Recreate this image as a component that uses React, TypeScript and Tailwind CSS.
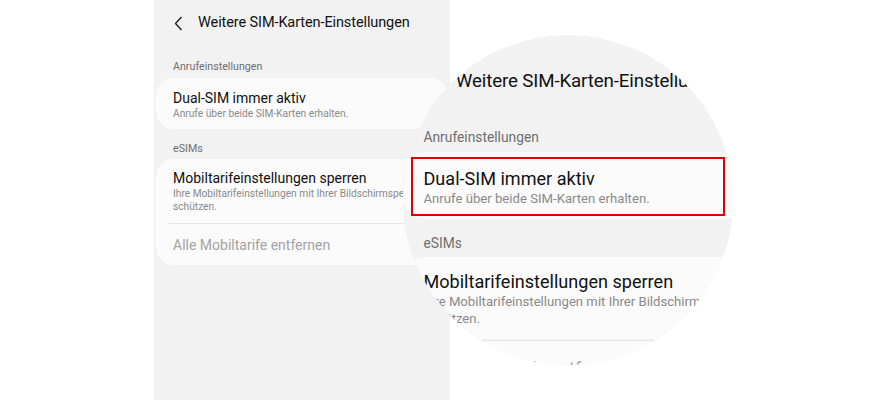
import React from 'react';

const font = { fontFamily: 'Roboto, "Noto Sans", sans-serif' };

function Screen() {
  return (
    <div className="w-[296px] h-[400px] bg-[#f2f2f2] text-[#111]" style={font}>
      {/* Header */}
      <div className="h-[46px] flex items-center pl-[20px] gap-[15px]">
        <svg width="9" height="15" viewBox="0 0 9 15" fill="none">
          <polyline points="7.5,1 1.5,7.5 7.5,14" stroke="#222" strokeWidth="1.4" strokeLinejoin="round" />
        </svg>
        <span className="text-[14.5px] leading-[18px] tracking-[-0.1px]">Weitere SIM-Karten-Einstellungen</span>
      </div>

      {/* Anrufeinstellungen */}
      <div className="pl-[19px] pt-[14px] pb-[4px] text-[10.7px] leading-[14px] text-[#6f6f6f]">Anrufeinstellungen</div>
      <div className="mx-[2px] rounded-[18px] bg-[#fbfbfb] pl-[17px] pt-[11px] pb-[9px]">
        <div className="text-[14px] leading-[18px]">Dual-SIM immer aktiv</div>
        <div className="text-[10.2px] leading-[13px] text-[#8a8a8a]">Anrufe über beide SIM-Karten erhalten.</div>
      </div>

      {/* eSIMs */}
      <div className="pl-[19px] pt-[12.5px] pb-[3px] text-[10.7px] leading-[14px] text-[#6f6f6f]">eSIMs</div>
      <div className="mx-[2px] rounded-[18px] bg-[#fbfbfb]">
        <div className="pl-[17px] pr-[20px] pt-[10px] pb-[10px]">
          <div className="text-[14px] leading-[18px]">Mobiltarifeinstellungen sperren</div>
          <div className="text-[10.2px] leading-[13px] text-[#8a8a8a]">
            Ihre Mobiltarifeinstellungen mit Ihrer Bildschirmsperre schützen.
          </div>
        </div>
        <div className="mx-[13px] h-px bg-[#e4e4e4]" />
        <div className="pl-[17px] pt-[12px] pb-[11px] text-[14px] leading-[18px] text-[#a3a3a3]">
          Alle Mobiltarife entfernen
        </div>
      </div>
    </div>
  );
}

export default function App() {
  return (
    <div className="relative w-[879px] h-[400px] bg-white overflow-hidden">
      <div className="ml-[154px] w-[296px] h-[400px] overflow-hidden">
        <Screen />
      </div>

      {/* Magnifier */}
      <div className="absolute left-[403px] top-[35px] w-[330px] h-[330px] rounded-full overflow-hidden bg-[#f2f2f2]">
        <div className="absolute left-[-4.5px] top-[16.5px] origin-top-left scale-[1.29]">
          <Screen />
        </div>
        <div className="absolute left-[8px] top-[122px] w-[314px] h-[59px] border-2 border-[#e00000]" />
      </div>
    </div>
  );
}
